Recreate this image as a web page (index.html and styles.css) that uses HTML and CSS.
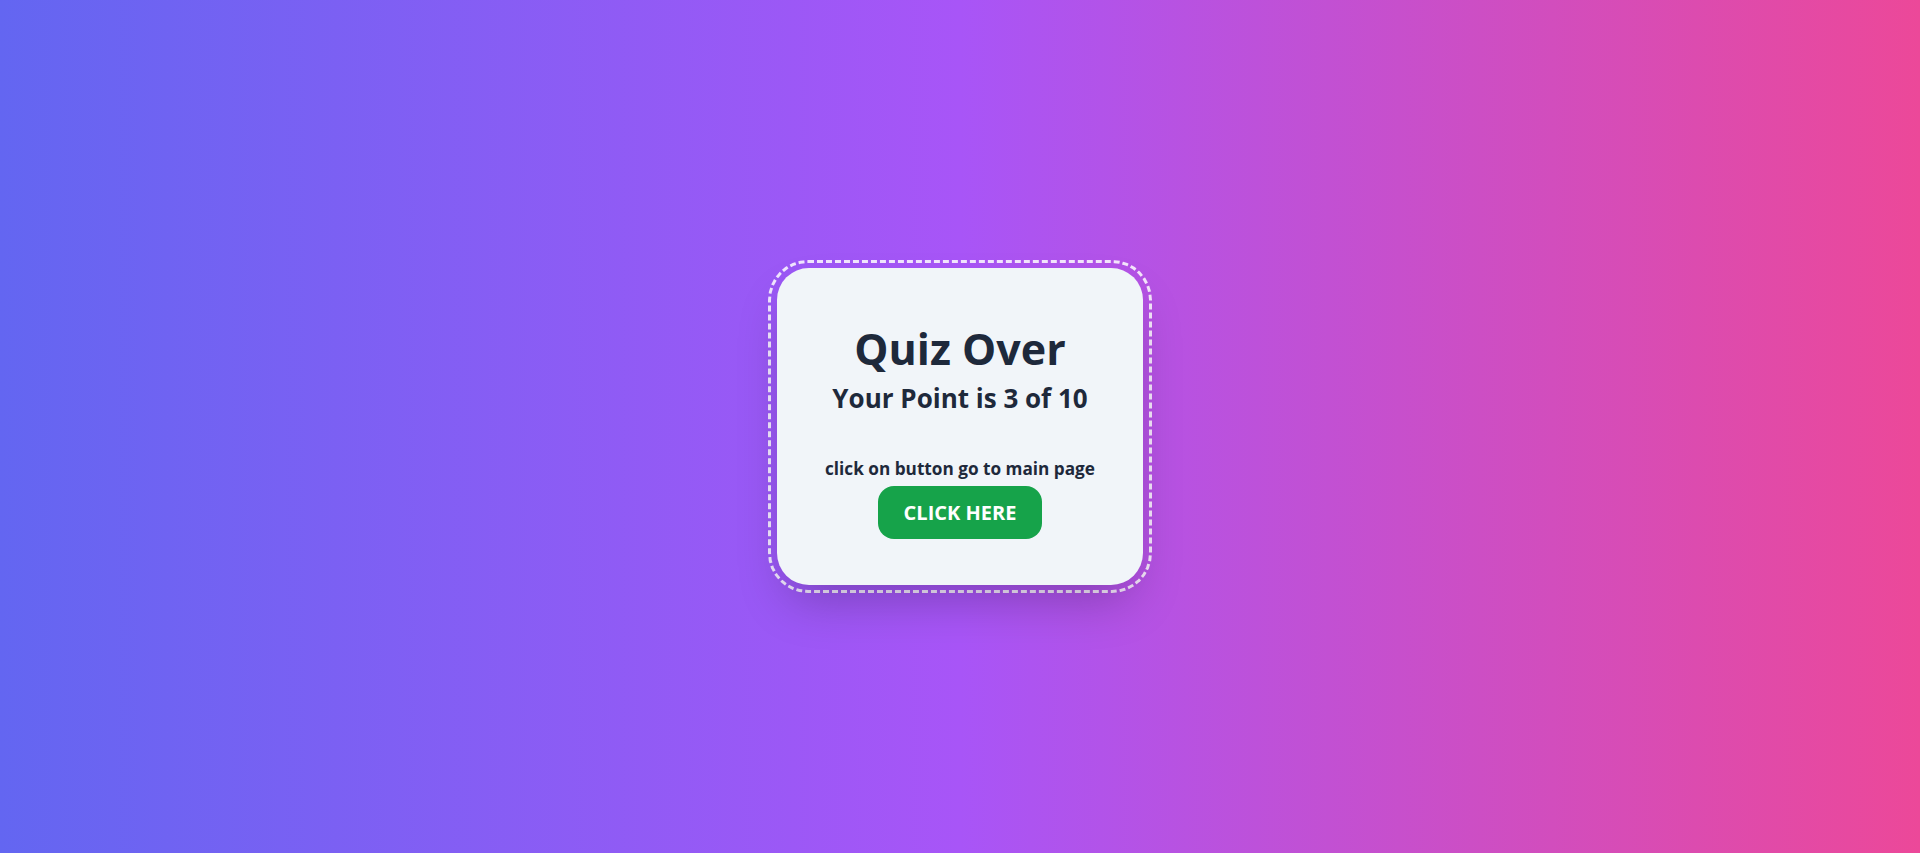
FILE: index.html
```html
<!DOCTYPE html>
<html lang="en">
<head>
<meta charset="utf-8">
<title>Quiz Over</title>
<link rel="stylesheet" href="styles.css">
</head>
<body>
  <main class="page">
    <div class="frame">
      <section class="card">
        <h1 class="title">Quiz Over</h1>
        <h2 class="score">Your Point is 3 of 10</h2>
        <p class="hint">click on button go to main page</p>
        <button class="btn" type="button">CLICK HERE</button>
      </section>
    </div>
  </main>
</body>
</html>
```

FILE: styles.css
```css
* { box-sizing: border-box; }

html, body {
  margin: 0;
  height: 100%;
}

body {
  font-family: "Open Sans", "Noto Sans", sans-serif;
  background: linear-gradient(to right, #6366f1, #a855f7, #ec4899);
  color: #1e293b;
}

.page {
  height: 100vh;
  display: flex;
  align-items: center;
  justify-content: center;
}

.frame {
  border: 3px dashed rgba(255, 255, 255, 0.85);
  border-radius: 40px;
  padding: 5px 6px;
}

.card {
  background: #f1f5f9;
  border-radius: 32px;
  padding: 48px 48px 46px;
  display: flex;
  flex-direction: column;
  align-items: center;
  text-align: center;
  box-shadow: 0 25px 50px -12px rgba(0, 0, 0, 0.25);
}

.title {
  margin: 0;
  font-size: 43px;
  line-height: 65px;
  font-weight: 700;
}

.score {
  margin: 0;
  font-size: 26px;
  line-height: 34px;
  font-weight: 700;
}

.hint {
  margin: 42px 0 5px;
  font-size: 17.2px;
  line-height: 24px;
  font-weight: 700;
}

.btn {
  font-family: inherit;
  font-size: 20px;
  line-height: 29px;
  font-weight: 700;
  color: #ffffff;
  background: #16a34a;
  border: none;
  border-radius: 16px;
  padding: 12px 26px;
  cursor: pointer;
}
```
